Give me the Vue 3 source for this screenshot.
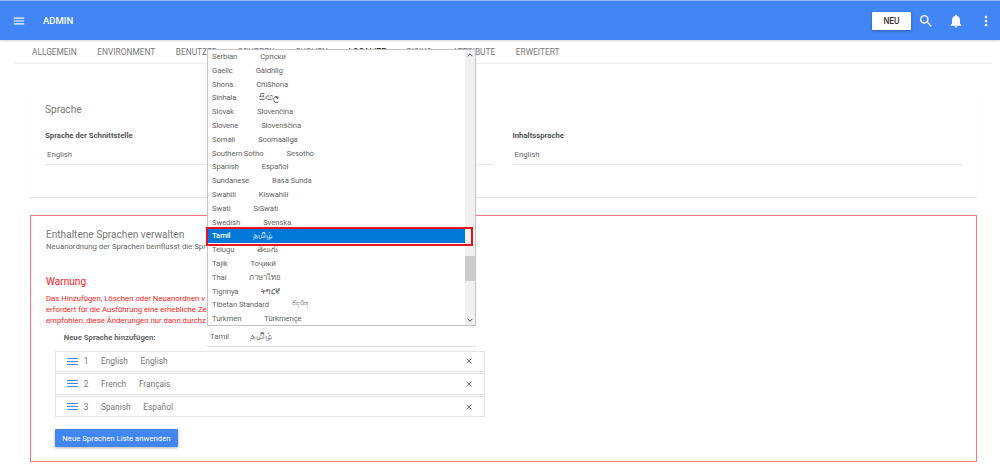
<script setup>
const tabs = ['Allgemein','Environment','Benutzer','Gruppen','Suchen','Localize','Risiko','Attribute','Erweitert']
const options = [
  ['Serbian','Српски'],['Gaelic','Gàidhlig'],['Shona','ChiShona'],['Sinhala','සිංහල'],['Slovak','Slovenčina'],
  ['Slovene','Slovenščina'],['Somali','Soomaaliga'],['Southern Sotho','Sesotho'],['Spanish','Español'],['Sundanese','Basa Sunda'],
  ['Swahili','Kiswahili'],['Swati','SiSwati'],['Swedish','Svenska'],['Tamil','தமிழ்'],['Telugu','తెలుగు'],
  ['Tajik','Тоҷикӣ'],['Thai','ภาษาไทย'],['Tigrinya','ትግርኛ'],['Tibetan Standard','བོད་ཡིག'],['Turkmen','Türkmençe']
]
const langs = [['1','English','English'],['2','French','Français'],['3','Spanish','Español']]
</script>

<template>
  <div class="page">
    <header class="bar">
      <svg class="menu" viewBox="0 0 24 24" width="14" height="14"><path fill="#fff" d="M3 18h18v-2H3v2zm0-5h18v-2H3v2zm0-7v2h18V6H3z"/></svg>
      <span class="title">ADMIN</span>
      <button class="neu">NEU</button>
      <svg class="ic" viewBox="0 0 24 24" width="16" height="16"><path fill="#fff" d="M15.5 14h-.79l-.28-.27A6.47 6.47 0 0 0 16 9.5 6.5 6.5 0 1 0 9.5 16c1.61 0 3.09-.59 4.23-1.57l.27.28v.79l5 4.99L20.49 19l-4.99-5zm-6 0C7.01 14 5 11.99 5 9.5S7.01 5 9.5 5 14 7.01 14 9.5 11.99 14 9.5 14z"/></svg>
      <svg class="ic" viewBox="0 0 24 24" width="16" height="16"><path fill="#fff" d="M12 22c1.1 0 2-.9 2-2h-4c0 1.1.9 2 2 2zm6-6v-5c0-3.07-1.63-5.64-4.5-6.32V4c0-.83-.67-1.5-1.5-1.5s-1.5.67-1.5 1.5v.68C7.64 5.36 6 7.92 6 11v5l-2 2v1h16v-1l-2-2z"/></svg>
      <svg class="ic" viewBox="0 0 24 24" width="16" height="16"><path fill="#fff" d="M12 8c1.1 0 2-.9 2-2s-.9-2-2-2-2 .9-2 2 .9 2 2 2zm0 2c-1.1 0-2 .9-2 2s.9 2 2 2 2-.9 2-2-.9-2-2-2zm0 6c-1.1 0-2 .9-2 2s.9 2 2 2 2-.9 2-2-.9-2-2-2z"/></svg>
    </header>

    <nav class="tabs">
      <span v-for="t in tabs" :key="t" :class="['tab', { active: t === 'Localize' }]">{{ t }}</span>
    </nav>

    <section class="card">
      <h2 class="heading">Sprache</h2>
      <div class="cols">
        <div class="col">
          <div class="label">Sprache der Schnittstelle</div>
          <div class="select">English</div>
        </div>
        <div class="col">
          <div class="label">Inhaltssprache</div>
          <div class="select">English</div>
        </div>
      </div>
    </section>

    <section class="manage">
      <h2 class="heading">Enthaltene Sprachen verwalten</h2>
      <p class="sub">Neuanordnung der Sprachen beinflusst die Spr</p>
      <h3 class="warn">Warnung</h3>
      <p class="warntext">Das Hinzufügen, Löschen oder Neuanordnen v<br>erfordert für die Ausführung eine erhebliche Ze<br>empfohlen, diese Änderungen nur dann durchz</p>
      <div class="add">
        <span class="addlabel">Neue Sprache hinzufügen:</span>
        <div class="addfield"><span>Tamil</span><span class="native">தமிழ்</span></div>
      </div>
      <ul class="list">
        <li v-for="l in langs" :key="l[0]" class="row">
          <svg class="drag" viewBox="0 0 12 10" width="11" height="7" preserveAspectRatio="none"><path fill="#4285f4" d="M0 0h12v1.4H0zM0 4.3h12v1.4H0zM0 8.6h12V10H0z"/></svg>
          <span class="num">{{ l[0] }}</span>
          <span class="en">{{ l[1] }}</span>
          <span>{{ l[2] }}</span>
          <svg class="x" viewBox="0 0 10 10" width="6" height="6"><path stroke="#666" stroke-width="1.5" d="M1 1l8 8M9 1l-8 8"/></svg>
        </li>
      </ul>
      <button class="apply">Neue Sprachen Liste anwenden</button>
    </section>

    <div class="dropdown">
      <div class="opts">
        <div v-for="o in options" :key="o[0]" :class="['opt', { sel: o[0] === 'Tamil', tib: o[0] === 'Tibetan Standard' }]">
          <span class="o1">{{ o[0] }}</span><span class="o2">{{ o[1] }}</span>
        </div>
      </div>
      <div class="scroll">
        <svg viewBox="0 0 10 6" width="6" height="4"><path fill="none" stroke="#444" stroke-width="1.6" d="M1 5l4-4 4 4"/></svg>
        <div class="thumb"></div>
        <svg viewBox="0 0 10 6" width="6" height="4"><path fill="none" stroke="#444" stroke-width="1.6" d="M1 1l4 4 4-4"/></svg>
      </div>
    </div>
    <div class="highlight"></div>
  </div>
</template>

<style scoped>
.page {
  position: relative;
  width: 1000px;
  height: 464px;
  overflow: hidden;
  background: #fff;
  font-family: Roboto, "Noto Sans", "DejaVu Sans", sans-serif;
  color: #666;
  font-size: 7.75px;
}
.bar {
  height: 39px;
  background: #4285f4;
  border-top: 1px solid #8fb5f6;
  display: flex;
  align-items: center;
  padding: 0 6.5px 0 12px;
  box-shadow: 0 1px 2px rgba(0,0,0,.18);
  position: relative;
}
.title { margin-left: 17px; color: #fff; font-weight: 500; font-size: 9.5px; flex: 1; }
.neu {
  width: 39px; height: 18px; border: 0; border-radius: 1px; background: #fff; color: #333;
  font: 500 8.33px Roboto, sans-serif; box-shadow: 0 1px 3px rgba(0,0,0,.3); margin-right: 6.5px; padding: 0;
}
.ic { margin-left: 14px; }
.neu + .ic { margin-left: 0; }
.tabs {
  display: flex;
  gap: 20.6px;
  height: 23px;
  align-items: center;
  margin: 0 8px 0 14px;
  padding-left: 18px;
  border-bottom: 1px solid #eee;
  text-transform: uppercase;
  color: #777;
  font-size: 8.33px;
}
.tab.active { color: #333; font-weight: 500; }
.card {
  margin: 28px 23px 0 30px;
  height: 105px;
  padding: 11px 15px 0;
  box-sizing: border-box;
  box-shadow: 0 1px 1px rgba(0,0,0,.1);
}
.heading { margin: 0; font-size: 10.1px; font-weight: 400; color: #777; line-height: 14px; }
.cols { display: grid; grid-template-columns: 449px 449px; gap: 18.5px; margin-top: 13px; }
.label { font-weight: 700; font-size: 7.75px; color: #555; line-height: 11px; }
.select { margin-top: 3px; padding: 5px 2px; height: 21px; box-sizing: border-box; border-bottom: 1px solid #e8e8e8; line-height: 12px; font-size: 7.75px; color: #666; }
.manage {
  margin: 18px 23px 0 30px;
  height: 247px;
  box-sizing: border-box;
  border: 1px solid #f77;
  padding: 12px 15px 0;
}
.sub { margin: -1px 0 0; line-height: 11px; font-size: 7.75px; white-space: nowrap; }
.warn { margin: 23px 0 0; font-size: 10.1px; font-weight: 400; color: #f22; line-height: 14px; }
.warntext { margin: 3.5px 0 0; font-size: 7.75px; line-height: 11.2px; color: #f22; white-space: nowrap; }
.add { display: flex; align-items: center; height: 20px; margin-top: 1px; padding-left: 17.7px; }
.addlabel { font-weight: 700; font-size: 7.75px; color: #666; width: 143.3px; flex: none; }
.addfield { width: 269px; height: 20px; flex: none; box-sizing: border-box; border-bottom: 1px solid #ddd; display: flex; gap: 21px; align-items: center; padding-left: 3px; font-size: 7.75px; }
.native { font-size: 8.5px; }
.list { list-style: none; margin: 3.5px 0 0 8.7px; padding: 0; width: 430.6px; display: flex; flex-direction: column; gap: 1.1px; }
.row {
  display: flex; align-items: center; height: 21.5px; box-sizing: border-box;
  border: 1px solid #e4e4e4; padding: 0 12px 0 11.3px; font-size: 8.33px; color: #777;
}
.num { margin-left: 5.7px; width: 17.3px; }
.en { margin-right: 12.7px; }
.x { margin-left: auto; }
.apply {
  display: block; margin: 12px 0 0 8.7px; width: 123.5px; height: 18px; border: 0; border-radius: 1px;
  background: #4285f4; color: #fff; font: 400 7.75px Roboto, sans-serif; padding: 0;
  box-shadow: 0 1px 3px rgba(0,0,0,.3);
}
.dropdown {
  position: absolute; left: 207px; top: 49px; width: 269px; height: 277px; box-sizing: border-box;
  background: #fff; border: 1px solid #c4c4c4; display: flex; overflow: hidden;
}
.opts { flex: 1; min-width: 0; }
.opt { height: 13.8px; line-height: 13.8px; padding-left: 4px; display: flex; font-size: 7.7px; letter-spacing: -.1px; color: #666; white-space: nowrap; }
.o1 { margin-right: 23px; }
.tib .o2 { font-size: 5.5px; }
.opt.sel { background: #0078d7; color: #fff; font-weight: 500; }
.scroll { width: 10px; background: #f0f0f0; display: flex; flex-direction: column; align-items: center; position: relative; justify-content: space-between; padding: 3px 0; box-sizing: border-box; }
.thumb { position: absolute; left: 0; top: 206px; width: 10px; height: 25px; background: #cdcdcd; }
.highlight { position: absolute; left: 206px; top: 226.5px; width: 267px; height: 19.5px; box-sizing: border-box; border: 2px solid #e8121f; }
</style>
